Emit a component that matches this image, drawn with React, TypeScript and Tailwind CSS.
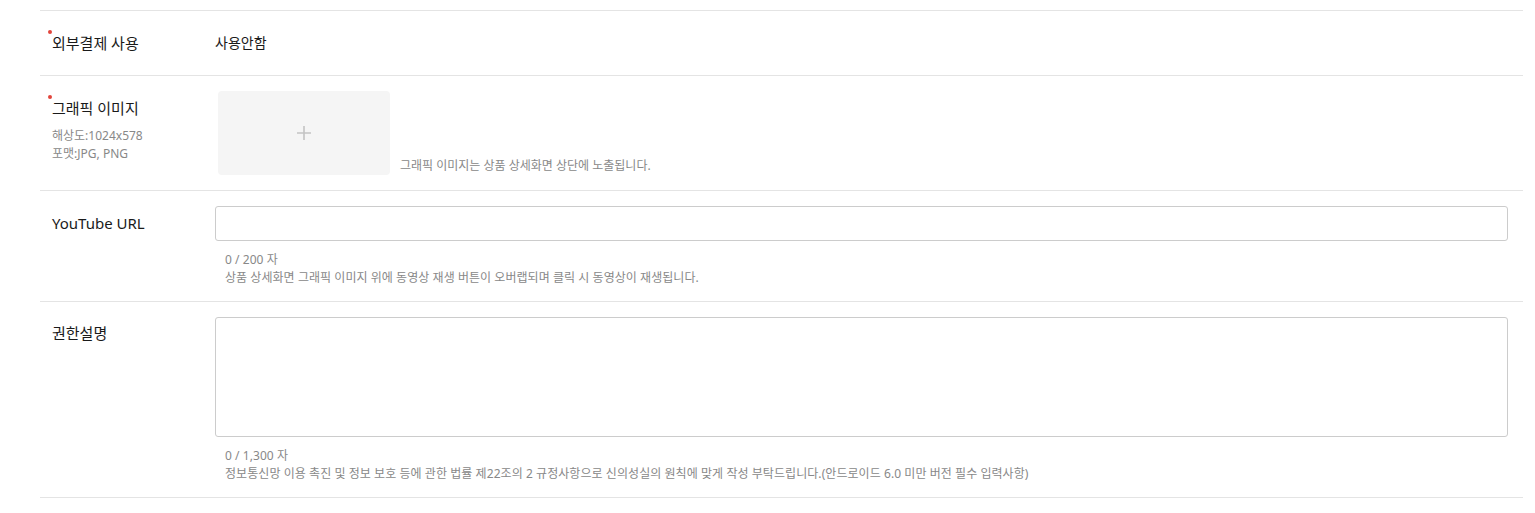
import React from "react";

const font = { fontFamily: '"Noto Sans", "Noto Sans CJK KR", sans-serif' };

function Label({ text, required }: { text: string; required?: boolean }) {
  return (
    <div className="relative text-[15px] leading-[20px] text-[#1a1a1a]">
      {required && (
        <span className="absolute left-[-4px] top-[-3px] h-[4px] w-[4px] rounded-full bg-[#e2453c]" />
      )}
      {text}
    </div>
  );
}

export default function App() {
  return (
    <div className="min-h-[513px] bg-white pt-[10px]" style={font}>
      <div className="ml-[40px] w-[1483px]">
        {/* Row 1 */}
        <div className="flex h-[65px] items-center border-t border-[#e4e4e4]">
          <div className="w-[175px] pl-[12px]">
            <Label text="외부결제 사용" required />
          </div>
          <div className="text-[14px] leading-[20px] text-[#1a1a1a]">사용안함</div>
        </div>

        {/* Row 2 */}
        <div className="flex h-[115px] border-t border-[#e4e4e4]">
          <div className="w-[175px] pl-[12px] pt-[22px]">
            <Label text="그래픽 이미지" required />
            <div className="mt-[9px] text-[12px] leading-[18px] text-[#888]">
              해상도:1024x578
              <br />
              포맷:JPG, PNG
            </div>
          </div>
          <div className="flex items-end self-start pt-[15px]">
            <div className="ml-[3px] flex h-[84px] w-[172px] items-center justify-center rounded-[4px] bg-[#f5f5f5]">
              <svg width="16" height="16" viewBox="0 0 16 16">
                <path d="M8 1v14M1 8h14" stroke="#c4c4c4" strokeWidth="1.6" />
              </svg>
            </div>
            <div className="ml-[10px] text-[12px] leading-[18px] text-[#888]">
              그래픽 이미지는 상품 상세화면 상단에 노출됩니다.
            </div>
          </div>
        </div>

        {/* Row 3 */}
        <div className="flex h-[111px] border-t border-[#e4e4e4]">
          <div className="w-[175px] pl-[12px] pt-[22px]">
            <Label text="YouTube URL" />
          </div>
          <div className="flex-1 pr-[15px] pt-[15px]">
            <input
              className="block h-[35px] w-full rounded-[3px] border border-[#cccccc] bg-white px-[10px] text-[14px] outline-none"
              style={font}
            />
            <div className="mt-[10px] pl-[10px] text-[12px] leading-[18px] tracking-[0.05px] text-[#888]">
              0 / 200 자
              <br />
              상품 상세화면 그래픽 이미지 위에 동영상 재생 버튼이 오버랩되며 클릭 시 동영상이 재생됩니다.
            </div>
          </div>
        </div>

        {/* Row 4 */}
        <div className="flex h-[197px] border-t border-b border-[#e4e4e4]">
          <div className="w-[175px] pl-[12px] pt-[21px]">
            <Label text="권한설명" />
          </div>
          <div className="flex-1 pr-[15px] pt-[15px]">
            <textarea
              className="block h-[120px] w-full resize-none rounded-[3px] border border-[#cccccc] bg-white px-[10px] py-[8px] text-[14px] outline-none"
              style={font}
            />
            <div className="mt-[10px] pl-[10px] text-[12px] leading-[18px] tracking-[0.06px] text-[#888]">
              0 / 1,300 자
              <br />
              정보통신망 이용 촉진 및 정보 보호 등에 관한 법률 제22조의 2 규정사항으로 신의성실의 원칙에 맞게 작성 부탁드립니다.(안드로이드 6.0 미만 버전 필수 입력사항)
            </div>
          </div>
        </div>
      </div>
    </div>
  );
}
